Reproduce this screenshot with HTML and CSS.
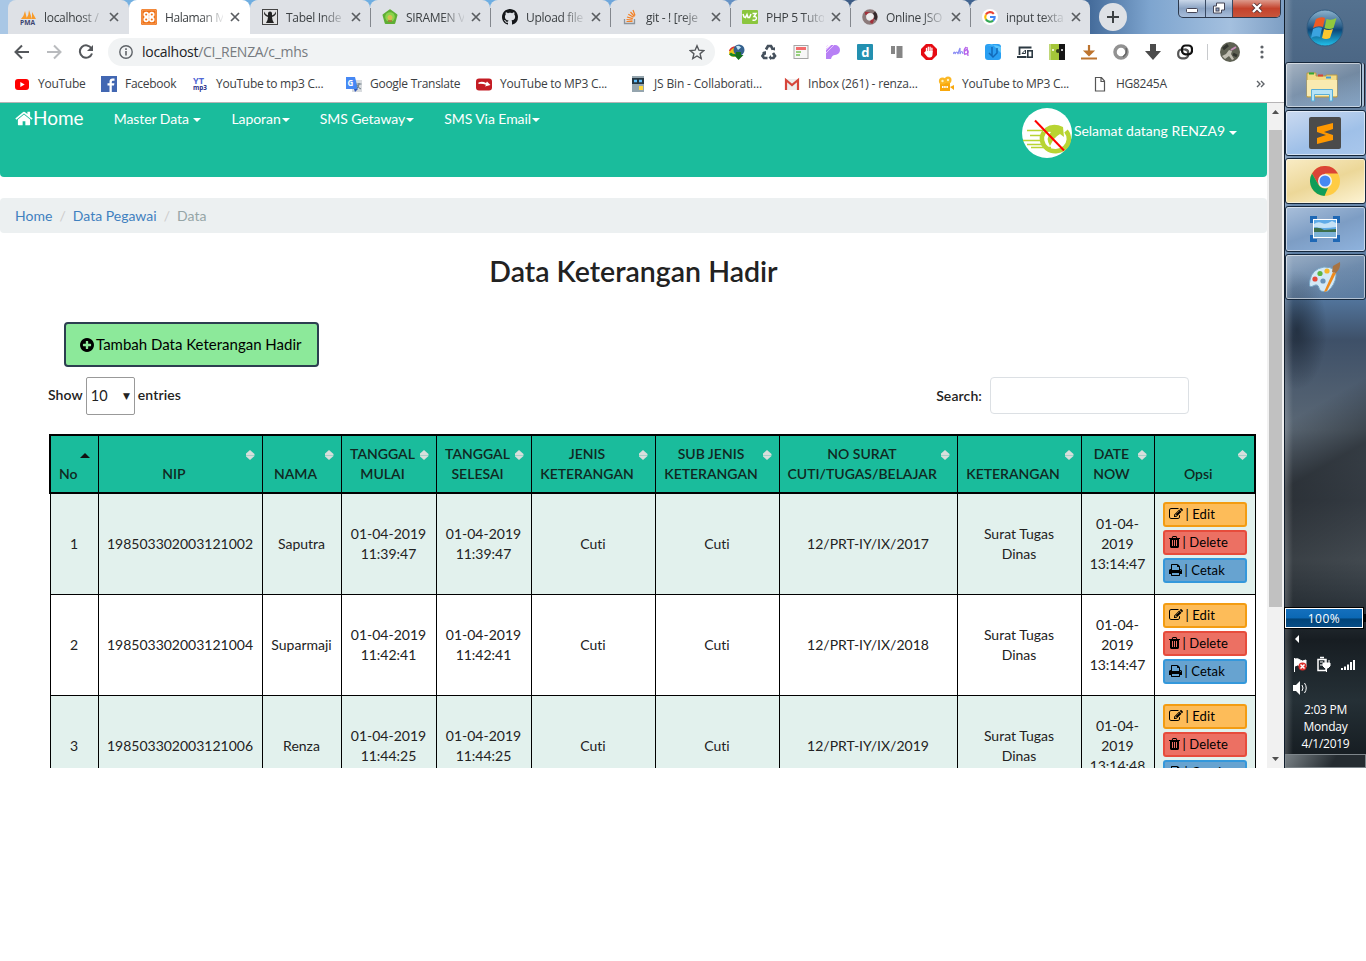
FILE: index.html
```html
<!DOCTYPE html>
<html lang="id">
<head>
<meta charset="utf-8">
<title>Data Keterangan Hadir</title>
<link rel="stylesheet" href="styles.css">
</head>
<body>
<svg class="defs" width="0" height="0">
  <symbol id="close" viewBox="0 0 10 10"><path d="M1 1l8 8M9 1l-8 8" stroke="#5a5d61" stroke-width="1.7"/></symbol>
  <symbol id="home" viewBox="0 0 1664 1792"><path d="M1408 992v480q0 26-19 45t-45 19h-384v-384h-256v384h-384q-26 0-45-19t-19-45v-480q0-1 .5-3t.5-3l575-474 575 474q1 2 1 6zm223-69l-62 74q-8 9-21 11h-3q-13 0-21-7l-692-577-692 577q-12 8-24 7-13-2-21-11l-62-74q-8-10-7-23.5t11-21.5l719-599q32-26 76-26t76 26l244 204v-195q0-14 9-23t23-9h192q14 0 23 9t9 23v408l219 182q10 8 11 21.5t-7 23.5z"/></symbol>
  <symbol id="plus" viewBox="128 128 1536 1536"><path d="M1344 960v-128q0-26-19-45t-45-19h-256v-256q0-26-19-45t-45-19h-128q-26 0-45 19t-19 45v256h-256q-26 0-45 19t-19 45v128q0 26 19 45t45 19h256v256q0 26 19 45t45 19h128q26 0 45-19t19-45v-256h256q26 0 45-19t19-45zm320-64q0 209-103 385.5t-279.5 279.5-385.5 103-385.5-103-279.5-279.5-103-385.5 103-385.5 279.5-279.5 385.5-103 385.5 103 279.5 279.5 103 385.5z"/></symbol>
  <symbol id="edit" viewBox="0 0 1792 1792"><path d="M888 1184l116-116-152-152-116 116v56h96v96h56zm440-720q-16-16-33 1l-350 350q-17 17-1 33t33-1l350-350q17-17 1-33zm80 594v190q0 119-84.5 203.5t-203.5 84.5h-832q-119 0-203.5-84.5t-84.5-203.5v-832q0-119 84.5-203.5t203.5-84.5h832q63 0 117 25 15 7 18 23 3 17-9 29l-49 49q-14 14-32 8-23-6-45-6h-832q-66 0-113 47t-47 113v832q0 66 47 113t113 47h832q66 0 113-47t47-113v-126q0-13 9-22l64-64q15-15 35-7t20 29zm-96-738l288 288-672 672h-288v-288zm444 132l-92 92-288-288 92-92q28-28 68-28t68 28l152 152q28 28 28 68t-28 68z"/></symbol>
  <symbol id="trash" viewBox="192 0 1408 1792"><path d="M704 1376v-704q0-14-9-23t-23-9h-64q-14 0-23 9t-9 23v704q0 14 9 23t23 9h64q14 0 23-9t9-23zm256 0v-704q0-14-9-23t-23-9h-64q-14 0-23 9t-9 23v704q0 14 9 23t23 9h64q14 0 23-9t9-23zm256 0v-704q0-14-9-23t-23-9h-64q-14 0-23 9t-9 23v704q0 14 9 23t23 9h64q14 0 23-9t9-23zm-544-992h448l-48-117q-7-9-17-11h-317q-10 2-17 11zm928 32v64q0 14-9 23t-23 9h-96v948q0 83-47 143.5t-113 60.5h-832q-66 0-113-58.5t-47-141.5v-952h-96q-14 0-23-9t-9-23v-64q0-14 9-23t23-9h309l70-167q15-37 54-63t79-26h320q40 0 79 26t54 63l70 167h309q14 0 23 9t9 23z"/></symbol>
  <symbol id="print" viewBox="64 0 1664 1792"><path d="M448 1536h896v-256h-896v256zm0-640h896v-384h-160q-40 0-68-28t-28-68v-160h-640v640zm1152 64q0-26-19-45t-45-19-45 19-19 45 19 45 45 19 45-19 19-45zm128 0v416q0 13-9.5 22.5t-22.5 9.5h-224v160q0 40-28 68t-68 28h-960q-40 0-68-28t-28-68v-160h-224q-13 0-22.5-9.5t-9.5-22.5v-416q0-79 56.5-135.5t135.5-56.5h64v-544q0-40 28-68t68-28h672q40 0 88 20t76 48l152 152q28 28 48 76t20 88v256h64q79 0 135.5 56.5t56.5 135.5z"/></symbol>
</svg>

<div class="desktop">
<div class="browser">
  <div class="tabstrip">
    <div class="tab first"><svg viewBox="0 0 16 16"><path d="M1 10Q4 7 5 2l2 8zM6 10Q9 6 9 1l3 9zM12 10V3l4 7z" fill="#f89c2c"/><text x="0" y="15.5" font-size="6.5" textLength="15" lengthAdjust="spacingAndGlyphs" class="fi" fill="#3b4470">PMA</text></svg><span class="title">localhost /</span><svg class="x"><use href="#close"/></svg></div>
    <div class="tab active"><svg viewBox="0 0 16 16"><rect width="16" height="16" rx="1.5" fill="#ef7014"/><rect x="1" y="1" width="14" height="14" rx="1" fill="none" stroke="#f7b27c" stroke-width=".8"/><g fill="none" stroke="#fff" stroke-width="1.700"><circle cx="5.200" cy="5.500" r="1.900"/><circle cx="10.800" cy="5.500" r="1.900"/><circle cx="5.200" cy="10.500" r="1.900"/><circle cx="10.800" cy="10.500" r="1.900"/><path d="M6 8h4"/></g></svg><span class="title">Halaman M</span><svg class="x"><use href="#close"/></svg></div>
    <div class="tab aftr"><svg viewBox="0 0 16 16"><rect x=".5" y=".5" width="15" height="15" fill="#e2e2e2" stroke="#444"/><path d="M2.500 2.500L2 5q2 3 4 3l-.5 3-1.500 3h8l-1.500-3L10 8q2 0 4-3l-.500-2.500-1 2.500L10 6.500V4.500a2 2 0 00-4 0v2L3.500 5z" fill="#222"/></svg><span class="title">Tabel Inde</span><svg class="x"><use href="#close"/></svg></div>
    <div class="tab"><svg viewBox="0 0 16 16"><path d="M8 1.300l6.500 4.700-2.200 8H3.700L1.500 6z" fill="#5fae35" stroke="#5fae35" stroke-width="2" stroke-linejoin="round"/><circle cx="8" cy="8" r="4.800" fill="#8bd44b"/><circle cx="8" cy="8.500" r="2.500" fill="#d9bd52"/><path d="M6 12h4" stroke="#c2402c"/></svg><span class="title">SIRAMEN V</span><svg class="x"><use href="#close"/></svg></div>
    <div class="tab"><svg viewBox="0 0 16 16"><path fill="#15171a" d="M8 0C3.580 0 0 3.580 0 8c0 3.540 2.290 6.530 5.470 7.590.4.070.55-.17.55-.38 0-.19-.01-.82-.01-1.490-2.010.37-2.530-.49-2.690-.94-.09-.23-.48-.94-.82-1.130-.28-.15-.68-.52-.01-.53.63-.01 1.080.58 1.230.82.72 1.210 1.870.87 2.330.66.07-.52.28-.87.51-1.070-1.780-.2-3.640-.89-3.640-3.950 0-.87.31-1.590.82-2.150-.08-.2-.36-1.020.08-2.120 0 0 .67-.21 2.200.82.64-.18 1.320-.27 2-.27s1.360.09 2 .27c1.530-1.040 2.200-.82 2.200-.82.44 1.100.16 1.920.08 2.120.51.56.82 1.270.82 2.150 0 3.070-1.870 3.750-3.650 3.950.29.25.54.73.54 1.480 0 1.070-.01 1.930-.01 2.200 0 .21.15.46.55.38A8.010 8.010 0 0016 8c0-4.420-3.580-8-8-8z"/></svg><span class="title">Upload file</span><svg class="x"><use href="#close"/></svg></div>
    <div class="tab"><svg viewBox="0 0 16 16"><path d="M2.500 10v4.500h10V10" fill="none" stroke="#8d949b" stroke-width="1.300"/><path d="M4.500 12.500h6M4.500 10.500l6 .6M5 8l5.800 1.600M6.300 5.300l5.200 3M8.500 3l4 4.500M11 1l2 5.500" stroke="#f48024" stroke-width="1.200"/></svg><span class="title">git - ! [reje</span><svg class="x"><use href="#close"/></svg></div>
    <div class="tab"><svg viewBox="0 0 16 16"><rect y="1" width="16" height="14" rx="1" fill="#8bc63e"/><path d="M1 5l1 3 1.500.5L5 5.500 6 8.500h1.500L9 5M10.500 4.500h3.500L12 7.500q3 0 2.200 2.500-1 2-3.700 1" fill="none" stroke="#fff" stroke-width="1.500"/></svg><span class="title">PHP 5 Tuto</span><svg class="x"><use href="#close"/></svg></div>
    <div class="tab"><svg viewBox="0 0 16 16"><circle cx="8" cy="8" r="5.800" fill="none" stroke="#8b7a7a" stroke-width="4"/><path d="M3 4.500A6 6 0 019 14" fill="none" stroke="#a3303a" stroke-width="3"/><path d="M12 3.500a6 6 0 011 7" fill="none" stroke="#35292b" stroke-width="3"/><circle cx="8" cy="7.500" r="3.600" fill="#eee"/></svg><span class="title">Online JSO</span><svg class="x"><use href="#close"/></svg></div>
    <div class="tab last"><svg viewBox="0 0 16 16"><circle cx="8" cy="8" r="8" fill="#fff"/><g fill="none" stroke-width="2.100"><path d="M11.800 4.800A4.800 4.800 0 003.900 5.600" stroke="#ea4335"/><path d="M3.900 5.600a4.800 4.800 0 000 4.800" stroke="#fbbc05"/><path d="M3.900 10.400a4.800 4.800 0 007.200 1.200" stroke="#34a853"/><path d="M11.100 11.600Q13 10 12.700 8H8" stroke="#4285f4"/></g></svg><span class="title">input texta</span><svg class="x"><use href="#close"/></svg></div>
    <div class="newtab"><svg width="14" height="14"><path d="M7 1v12M1 7h12" stroke="#3c4043" stroke-width="2"/></svg></div>
    <div class="winbtns"><span><svg width="12" height="12"><rect x=".5" y="6.500" width="11" height="4" rx="1" fill="#fff" stroke="#445"/></svg></span><span><svg width="12" height="12"><path d="M3.500 1h8v7h-3v3h-8V4h3z" fill="#fff" stroke="#445"/><rect x="3" y="6" width="3" height="3" fill="#8fa4c4" stroke="#445"/></svg></span><span class="wclose"><svg width="12" height="10"><path d="M2 1l8 8M10 1L2 9" stroke="#533" stroke-width="4"/><path d="M2 1l8 8M10 1L2 9" stroke="#fff" stroke-width="2.400"/></svg></span></div>
  </div>

  <div class="addressbar">
    <svg class="nav" viewBox="0 0 16 16"><path d="M15 8H2M8 1.500L1.500 8 8 14.500" stroke="#54575b"/></svg>
    <svg class="nav" viewBox="0 0 16 16"><path d="M1 8h13M8 1.500L14.500 8 8 14.500" stroke="#b9bbbe"/></svg>
    <svg class="nav" viewBox="0 0 16 16"><path d="M13.500 4.500A6.200 6.200 0 1014 9.500" stroke="#54575b"/><path d="M15 1v6H9z" fill="#54575b"/></svg>
    <div class="omnibox">
      <svg width="14" height="14"><circle cx="7" cy="7" r="6.200" fill="none" stroke="#5f6368" stroke-width="1.400"/><path d="M7 6v4.500M7 3.300v1.600" stroke="#5f6368" stroke-width="1.600"/></svg>
      <span class="url"><b>localhost</b>/CI_RENZA/c_mhs</span>
      <svg class="star" width="16" height="16" viewBox="0 0 16 16"><path d="M8 1.800l1.900 4.400 4.800.4-3.600 3.200 1.100 4.700L8 12l-4.200 2.500 1.100-4.700L1.300 6.600l4.800-.4z" fill="none" stroke="#54575b" stroke-width="1.400"/></svg>
    </div>
    <div class="exts">
      <svg viewBox="0 0 16 16"><path d="M0 9q0-5 7-6l2 8-4 2Q0 12 0 9z" fill="#efc51c"/><path d="M.5 7q2-4 6-4" stroke="#d33" fill="none" stroke-width="1.500"/><path d="M1 9.500q3 3 7 1" stroke="#178a26" fill="none" stroke-width="2.500"/><circle cx="10" cy="6" r="5.500" fill="#35628f"/><path d="M7 2.500q3-2 5 1L9 6z" fill="#c5e6f5"/><path d="M7 8h5v3h2.500L9.500 16 5 11h2z" fill="#15701f"/></svg>
      <svg viewBox="0 0 16 16"><g fill="none" stroke="#45505c" stroke-width="2.700"><path d="M5 5.500L7 2h3l2 3.500M12 9l2 3-1.500 2H9M6.500 14H3l-1.500-2L4 8"/></g><path d="M10 5.500l4 1V3zM10 11v5l-2.500-2.500zM1 8.500l4-1.500v4z" fill="#45505c"/></svg>
      <svg viewBox="0 0 16 16"><rect x="1" y="1.500" width="14" height="13" fill="#f7f7f7" stroke="#a5a5a5"/><path d="M3 4.500h10" stroke="#f26c6c" stroke-width="3"/><path d="M3 8h5M3 11h4" stroke="#78c257" stroke-width="1.300"/></svg>
      <svg viewBox="0 0 16 16"><path d="M1 5l5-4h4a5 5 0 010 10q-3 0-4 4H1z" fill="#b780f5"/><path d="M1 9l8-8M1 6l5-5M1 3l2-2" stroke="#f3d2ff" stroke-width=".8"/></svg>
      <svg viewBox="0 0 16 16"><rect width="16" height="16" rx="1" fill="#2390b0"/><text x="4.200" y="13" class="fi" font-size="13" fill="#fff">d</text></svg>
      <svg viewBox="0 0 16 16"><path d="M2 2h4v8H2zM7.500 2h6v12h-6z" fill="#858585"/></svg>
      <svg viewBox="0 0 16 16"><path d="M5 0h6l5 5v6l-5 5H5l-5-5V5z" fill="#e60b13"/><path d="M5.500 8V4.500M7.300 7V3.200M9.100 7V3.200M10.900 8V4.200" stroke="#fff" stroke-width="1.300" stroke-linecap="round"/><path d="M4.800 7h6.800v3q0 3.500-3 3.500-2 0-3-1.500L3 8.800l1-.8z" fill="#fff"/></svg>
      <svg viewBox="0 0 16 16"><path d="M0 10q2-4 2 0 2-4 3 0 1-4 2-6v6q2-5 3 0" fill="none" stroke="#8a8cf4" stroke-width="1.200"/><path d="M13 3q-3 3-1 8M11 8q3-4 4-1t-3 3M14 3l1 9" fill="none" stroke="#b764ea" stroke-width="1.300"/></svg>
      <svg viewBox="0 0 16 16"><rect width="16" height="16" rx="3" fill="#299ff2"/><path d="M0 3q8-4 16 0v6L7 0z" fill="#5fc6fb"/><path d="M7 3v9M4 9l4 4 4-4V4" fill="none" stroke="#1269b8" stroke-width="1.500"/></svg>
      <svg viewBox="0 0 16 16"><path d="M2.500 11V3.500h12M0 13h9.500" fill="none" stroke="#2c3942" stroke-width="1.800"/><rect x="10.800" y="6.800" width="4.400" height="6.400" fill="#fff" stroke="#2c3942" stroke-width="1.600"/><path d="M5 9.500h3.500V6L5 9.500" fill="none" stroke="#2c3942"/></svg>
      <svg viewBox="0 0 16 16"><path d="M0 0h10v16H0z" fill="#a4c639"/><path d="M10 0h6v16h-6z" fill="#151515"/><path d="M3 6h2M12 6h2" stroke="#fff" stroke-width="1.500"/><path d="M1 0v16" stroke="#dce9b7"/><circle cx="9" cy="7" r="2" fill="#33401a"/></svg>
      <svg viewBox="0 0 16 16"><path d="M8 1v7M4.500 7.500L8 11l3.500-3.500zM0 14.500h16" stroke="#bd742f" stroke-width="2.200" fill="#bd742f"/></svg>
      <svg viewBox="0 0 16 16"><circle cx="8" cy="8" r="6" fill="none" stroke="#929292" stroke-width="3.500"/><path d="M13 4q2 5-3 9" stroke="#666" stroke-width="1.500" fill="none"/></svg>
      <svg viewBox="0 0 16 16"><path d="M5 0h6v7h5l-8 9-8-9h5z" fill="#4b4b4b"/></svg>
      <svg viewBox="0 0 16 16" fill="none" stroke-width="2.200"><rect x="1.200" y="5.500" width="10" height="8.800" rx="3.500" stroke="#555"/><rect x="5" y="1.500" width="10" height="8.800" rx="3.500" stroke="#111"/><path d="M8 5.500q3.200 0 3.200 3" stroke="#555"/></svg>
    </div>
    <i class="sep"></i>
    <svg class="avatar" viewBox="0 0 20 20"><circle cx="10" cy="10" r="10" fill="#5e6153"/><path d="M2 14l4-2 3-4 3 1-1 3 3 5-2 1-3-4-4 3z" fill="#c1bfb3"/><path d="M11 8l5-3" stroke="#ca8fbc" stroke-width="2"/><path d="M3 7l5-4M13 12l4 2" stroke="#32352f" stroke-width="3"/></svg>
    <svg class="dots" width="4" height="16"><g fill="#5f6368"><circle cx="2" cy="3" r="1.600"/><circle cx="2" cy="8" r="1.600"/><circle cx="2" cy="13" r="1.600"/></g></svg>
  </div>

  <div class="bookmarks">
    <span><svg viewBox="0 0 16 16"><rect x="1" y="3" width="14" height="11" rx="3" fill="#f00"/><path d="M6.300 6l4.400 2.500L6.300 11z" fill="#fff"/></svg><em>YouTube</em></span>
    <span><svg viewBox="0 0 16 16"><rect width="16" height="16" fill="#4267b2"/><path d="M8.500 16V9.500h-2V7.300h2V5.500q0-3 3-3h2v2.200H12q-1.200 0-1.200 1.200v1.400h2.600l-.4 2.200h-2.200V16z" fill="#fff"/></svg><em>Facebook</em></span>
    <span><svg viewBox="0 0 16 16"><text x="1" y="7.500" class="fi" font-size="8" textLength="11" lengthAdjust="spacingAndGlyphs" fill="#5267d5">YT</text><text x="1" y="14" class="fi" font-size="7" textLength="14" lengthAdjust="spacingAndGlyphs" fill="#27308a">mp3</text></svg><em>YouTube to mp3 C...</em></span>
    <span><svg viewBox="0 0 16 16"><rect x="6" y="4" width="10" height="12" fill="#d9dcdf"/><path d="M0 1h9l3 12H0z" fill="#4688f4"/><path d="M8 13h4l-3 3z" fill="#3056b8"/><text x="1.500" y="9.500" class="fi" font-size="8" fill="#fff">G</text><path d="M10.500 8h5M13 7v1q0 3-2.500 4.500M11 9q1 3 4 4" stroke="#6d7c86" fill="none"/></svg><em>Google Translate</em></span>
    <span><svg viewBox="0 0 16 16"><rect y="2.500" width="16" height="12" rx="3" fill="#c41c24"/><path d="M2.500 6.500q4-1.500 7.500.500L11 5.500l3.500 3.500-5.500 1.500 1-1.700Q6 7.500 2.500 8z" fill="#fff"/></svg><em>YouTube to MP3 C...</em></span>
    <span><svg viewBox="0 0 16 16"><path d="M2 0h12v16H2z" fill="#95a5ae"/><path d="M2 2h12v6H2z" fill="#253742"/><path d="M4 5h3M9 5h3" stroke="#5ebeff" stroke-width="2.500"/><rect x="9" y="10" width="4" height="4" fill="#ffd83c"/></svg><em class="wider">JS Bin - Collaborati...</em></span>
    <span><svg viewBox="0 0 16 16"><path d="M1 3h14v11H1z" fill="#eee"/><path d="M2 14V4l6 5 6-5v10" fill="none" stroke="#d6453a" stroke-width="2.200"/></svg><em class="wider">Inbox (261) - renza...</em></span>
    <span><svg viewBox="0 0 16 16"><path d="M2 7h10v8H2zM12 11l4-2v5z" fill="#f9a80c"/><circle cx="4.500" cy="5" r="3.600" fill="#fbb724"/><circle cx="10" cy="4" r="3.500" fill="#fbb724"/><circle cx="4.500" cy="5" r="1.200" fill="#fff2c0"/><circle cx="10" cy="4" r="1.200" fill="#fff2c0"/><path d="M4 11h6" stroke="#fff" stroke-width="2" stroke-dasharray="1.500 .7"/></svg><em>YouTube to MP3 C...</em></span>
    <span><svg viewBox="0 0 16 16"><path d="M3.500 1.500h6l3 3.500v10h-9zM9 1.500V5.500h3.500" fill="none" stroke="#555" stroke-width="1.200"/></svg><em>HG8245A</em></span>
    <svg class="more" width="9" height="8"><path d="M1 1l3 3-3 3M5 1l3 3-3 3" fill="none" stroke="#5f6368" stroke-width="1.400"/></svg>
  </div>

  <div class="viewport">
    <main class="page">
      <nav class="navbar">
        <a class="brand"><svg><use href="#home"/></svg>Home</a>
        <a>Master Data <i class="caret"></i></a>
        <a>Laporan<i class="caret"></i></a>
        <a>SMS Getaway<i class="caret"></i></a>
        <a>SMS Via Email<i class="caret"></i></a>
        <a class="user"><svg width="50" height="50" viewBox="0 0 50 50"><circle cx="25" cy="25" r="25" fill="#fff"/><path d="M22 24a13.500 12.500 0 1022-1" fill="none" stroke="#b8d432" stroke-width="4.500"/><path d="M23 20q8-6 18-1l1 10-4-3q-6 3-10 12-5-8 1-14-4-1-7 2z" fill="#b8d432"/><path d="M5 22.500h17M8 27.500h13M1 32.500h20M5 36.500h16M9 39.500h20" stroke="#b8d432" stroke-width="1.400"/><path d="M13 12.500l29 30" stroke="#f00" stroke-width="2"/></svg><span>Selamat datang RENZA9</span><i class="caret"></i></a>
      </nav>
      <div class="crumbs"><a>Home</a><i>/</i><a>Data Pegawai</a><i>/</i><span>Data</span></div>
      <h1>Data Keterangan Hadir</h1>
      <a class="add"><svg><use href="#plus"/></svg><span>Tambah Data Keterangan Hadir</span></a>
      <div class="controls"><span class="lbl">Show</span><span class="select">10<i>▼</i></span><span class="lbl">entries</span><span class="lbl search">Search:</span><span class="input"></span></div>
      <table>
        <colgroup><col class="c1"><col class="c2"><col class="c3"><col class="c4"><col class="c4"><col class="c5"><col class="c5"><col class="c6"><col class="c5"><col class="c7"><col class="c8"></colgroup>
        <thead><tr>
          <th>No<i class="up"></i></th><th>NIP<i class="sort"></i></th><th>NAMA<i class="sort"></i></th><th>TANGGAL MULAI<i class="sort"></i></th><th>TANGGAL SELESAI<i class="sort"></i></th><th>JENIS KETERANGAN<i class="sort"></i></th><th>SUB JENIS KETERANGAN<i class="sort"></i></th><th>NO SURAT CUTI/TUGAS/BELAJAR<i class="sort"></i></th><th>KETERANGAN<i class="sort"></i></th><th>DATE NOW<i class="sort"></i></th><th>Opsi<i class="sort"></i></th>
        </tr></thead>
        <tbody>
          <tr><td>1</td><td>198503302003121002</td><td>Saputra</td><td>01-04-2019 11:39:47</td><td>01-04-2019 11:39:47</td><td>Cuti</td><td>Cuti</td><td>12/PRT-IY/IX/2017</td><td>Surat Tugas Dinas</td><td>01-04-2019 13:14:47</td><td><a class="btn edit"><svg class="w13"><use href="#edit"/></svg>| Edit</a><a class="btn del"><svg class="w10"><use href="#trash"/></svg>| Delete</a><a class="btn prt"><svg class="w12"><use href="#print"/></svg>| Cetak</a></td></tr>
          <tr><td>2</td><td>198503302003121004</td><td>Suparmaji</td><td>01-04-2019 11:42:41</td><td>01-04-2019 11:42:41</td><td>Cuti</td><td>Cuti</td><td>12/PRT-IY/IX/2018</td><td>Surat Tugas Dinas</td><td>01-04-2019 13:14:47</td><td><a class="btn edit"><svg class="w13"><use href="#edit"/></svg>| Edit</a><a class="btn del"><svg class="w10"><use href="#trash"/></svg>| Delete</a><a class="btn prt"><svg class="w12"><use href="#print"/></svg>| Cetak</a></td></tr>
          <tr><td>3</td><td>198503302003121006</td><td>Renza</td><td>01-04-2019 11:44:25</td><td>01-04-2019 11:44:25</td><td>Cuti</td><td>Cuti</td><td>12/PRT-IY/IX/2019</td><td>Surat Tugas Dinas</td><td>01-04-2019 13:14:48</td><td><a class="btn edit"><svg class="w13"><use href="#edit"/></svg>| Edit</a><a class="btn del"><svg class="w10"><use href="#trash"/></svg>| Delete</a><a class="btn prt"><svg class="w12"><use href="#print"/></svg>| Cetak</a></td></tr>
        </tbody>
      </table>
    </main>
    <div class="scrollbar"><svg width="7" height="4"><path d="M0 4l3.500-4L7 4z" fill="#505050"/></svg><div class="thumb"></div><svg class="down" width="7" height="4"><path d="M0 0h7L3.500 4z" fill="#505050"/></svg></div>
  </div>
</div>

<aside class="taskbar">
  <div class="start"><svg width="40" height="40" viewBox="0 0 40 40"><defs><linearGradient id="orb" x2="0" y2="1"><stop stop-color="#8fb5cf"/><stop offset=".45" stop-color="#2c608b"/><stop offset=".55" stop-color="#0c4678"/><stop offset="1" stop-color="#21c4ee"/></linearGradient></defs><circle cx="20" cy="20" r="18" fill="url(#orb)" stroke="#335c80"/><path d="M11 11q5-3 9-1l-2 9q-5-2-10 1z" fill="#ee5a24"/><path d="M21.500 11q5 2 10-1l-3 10q-4 2-9 0z" fill="#91c83e"/><path d="M8 21q5-3 9-1l-2 9q-5-2-9 1z" fill="#3ba3e0"/><path d="M19 21q4 2 9 0l-3 9q-4 2-8 0z" fill="#fdc72f"/></svg></div>
  <div class="task stack"><svg width="34" height="32" viewBox="0 0 34 32"><path d="M2 2h9v3h10v-1h11v22H2z" fill="#f3dc87" stroke="#bb9a42"/><path d="M4 2.500h5" stroke="#34a832" stroke-width="2"/><path d="M13 4.500h5" stroke="#d64535" stroke-width="2"/><path d="M21 6.500h5" stroke="#3f9dd8" stroke-width="2"/><path d="M2 9h30v16H2z" fill="#f9eab0"/><path d="M6.500 30V18.500h21V30h-3v-6.500h-15V30z" fill="#b6e3f7" stroke="#5aaed6"/></svg></div>
  <div class="task b2"><svg width="32" height="32" viewBox="0 0 32 32"><rect width="32" height="32" rx="2" fill="#4b4b4b"/><path d="M24 6v6l-9 3 9 3v5L8 27v-6l9-3-9-3v-5z" fill="#ff9800"/></svg></div>
  <div class="task b3"><svg width="30" height="30" viewBox="0 0 30 30"><circle cx="15" cy="15" r="15" fill="#fc4"/><path d="M2 7.500A15 15 0 0128 7.500H15L8.500 18.800z" fill="#db4437"/><path d="M2 7.500l6.500 11.300Q12 24 18 22l-3.500 8A15 15 0 012 7.500z" fill="#109d59"/><circle cx="15" cy="15" r="7" fill="#f3f3f3"/><circle cx="15" cy="15" r="5.500" fill="#4688f1"/></svg></div>
  <div class="task b4"><svg width="30" height="26" viewBox="0 0 30 26"><path d="M1.500 7V1.500H7M23 1.500h5.500V7M28.500 19v5.500H23M7 24.500H1.500V19" fill="none" stroke="#1f68b5" stroke-width="3"/><rect x="3.500" y="3.500" width="23" height="18" fill="#5fabe8" stroke="#fff"/><path d="M4 8q4-3 8-1t10-2l4 2v4q-12 2-22 0z" fill="#c4e2f7"/><path d="M4 12q6-1 10 2l12-1v3H4z" fill="#3d6f4c"/><path d="M4 16h22v5H4z" fill="#7fb3d8"/></svg></div>
  <div class="task b5"><svg width="32" height="32" viewBox="0 0 32 32"><path d="M1 19Q3 8 15 6q13 0 12 9t-8 15q-8 2-9-3t-6-2-3-6z" fill="#d3e9f7" stroke="#7aa7c6"/><circle cx="6" cy="18" r="2.600" fill="#e34a3b"/><circle cx="11" cy="12.500" r="2.600" fill="#5bb542"/><circle cx="18" cy="10" r="2.600" fill="#f5b72b"/><circle cx="14" cy="20" r="2.600" fill="#6a93b8"/><path d="M15 31l9-20 3 1-9 18z" fill="#ee8a1d"/><path d="M23 11l1-6 7-4q1 6-4 11z" fill="#a87342"/></svg></div>
  <div class="gap"></div>
  <div class="power"><div class="battery">100%</div><i></i></div>
  <div class="tray">
    <svg width="82" height="70" viewBox="1 0 82 70"><path d="M15 7v8l-4-4z" fill="#fff"/><path d="M10.500 30v14M11 31q3-1 5 1t6 0v7q-4 1-6-1t-5 0z" stroke="#fff" fill="#fff"/><circle cx="18.500" cy="38.500" r="4" fill="#dc2e2b"/><path d="M16.500 36.500l4 4M20.500 36.500l-4 4" stroke="#fff" stroke-width="1.500"/><path d="M34 31.500h8v11h-8zM36 29.500h4" stroke="#fff" stroke-width="1.500" fill="none"/><path d="M36 34h3M36 37h3" stroke="#fff"/><path d="M39 35h7v3l-2 2h-3l-2-2zM41 32v3M45 32v3M42.500 40v4" stroke="#fff" fill="#fff"/><path d="M57 40v2h2v-2zM60 38.500V42h2v-3.500zM63 36.500V42h2v-5.500zM66 34v8h2v-8zM69 32v10h2V32z" fill="#fff"/><path d="M9 57h3l4-4v14l-4-4H9z" fill="#fff"/><path d="M18 57q2 3 0 6M20.500 55q3.500 5 0 10" stroke="#fff" fill="none"/></svg>
    <div class="clock"><div>2:03 PM</div><div>Monday</div><div>4/1/2019</div></div>
  </div>
  <div class="peek"></div>
</aside>
</div>
</body>
</html>
```
FILE: styles.css
```css
* { box-sizing: border-box; }
body { margin: 0; background: #fff; font-family: Lato, sans-serif; color: #222; overflow: hidden; font-variant-ligatures: none; }
i, em { font-style: normal; }
.defs { position: absolute; }
.desktop { display: flex; width: 1366px; height: 768px; overflow: hidden; }
.fi { font-family: "Open Sans", sans-serif; font-weight: 700; }

/* Browser chrome */
.browser { width: 1284px; display: flex; flex-direction: column; font-family: "Open Sans", sans-serif; }
.tabstrip { height: 34px; display: flex; padding-left: 8px; background: linear-gradient(90deg, #a9c7e5 0, #a9c7e5 20px, #70aee0 140px, #6eaee2 520px, #6f9fd4 700px, #3d5c85 850px, #456c9b 1090px, #7ea5cf 1150px, #a4c0df 1230px, #7e9fc4 1284px); }
.tab { flex: 0 0 120px; height: 34px; background: #dee1e6; border-radius: 8px 8px 0 0; display: flex; align-items: center; padding-left: 12px; position: relative; }
.tab > svg { width: 16px; height: 16px; flex: none; }
.tab .title { width: 58px; flex: none; margin-left: 8px; font-size: 12px; letter-spacing: -.3px; color: #3c4043; white-space: nowrap; overflow: hidden; -webkit-mask-image: linear-gradient(90deg, #000 62%, #0002 98%); mask-image: linear-gradient(90deg, #000 62%, #0002 98%); }
.tab > svg.x { width: 10px; height: 10px; margin-left: 7px; }
.tab + .tab::before { content: ""; position: absolute; left: 0; top: 8px; width: 1px; height: 19px; background: #83878d; }
.tab.first, .tab.active { flex-basis: 121px; }
.tab.active { background: #fff; }
.tab.active .title { letter-spacing: -.4px; }
.tab.active.active::before, .tab.aftr.aftr::before { display: none; }
.newtab { width: 28px; height: 28px; border-radius: 14px; background: #dee1e6; margin: 3px 0 0 9px; display: grid; place-items: center; }
.winbtns { margin-left: auto; margin-right: 3px; height: 18px; width: 103px; display: flex; border: 1px solid #2c394d; border-top: 0; border-radius: 0 0 5px 5px; background: linear-gradient(#c9d7e9, #8aa2c2 50%, #a8bedb); overflow: hidden; }
.winbtns span { width: 27px; display: grid; place-items: center; border-right: 1px solid #394a63; padding-bottom: 2px; }
.winbtns .wclose { flex: 1; border: 0; background: linear-gradient(#dd9a8c, #c4422c 50%, #c8553b); }
.addressbar { height: 36px; display: flex; align-items: center; padding-left: 14px; }
.nav { width: 16px; height: 16px; margin-right: 16px; fill: none; stroke-width: 2; }
.omnibox { width: 607px; height: 28px; margin-left: -2px; background: #f1f3f4; border-radius: 14px; display: flex; align-items: center; padding: 0 10px 0 11px; }
.url { font-size: 14px; letter-spacing: -.28px; margin-left: 9px; padding-bottom: 2px; color: #777b80; white-space: nowrap; }
.url b { font-weight: 400; color: #202124; }
.star { margin-left: auto; }
.exts { display: flex; gap: 16px; margin-left: 14px; }
.exts svg { width: 16px; height: 16px; }
.sep { width: 1px; height: 16px; background: #c8cacd; margin-left: 14px; }
.avatar { width: 20px; height: 20px; margin-left: 12px; }
.dots { margin-left: 20px; }
.bookmarks { height: 33px; border-bottom: 1px solid #b6b4b6; display: grid; grid-template-columns: 87px 91px 154px 130px repeat(4, 154px) 155px auto; padding: 0 0 4px 14px; align-items: center; font-size: 12px; color: #3c4043; justify-content: start; }
.bookmarks span { display: flex; align-items: center; white-space: nowrap; }
.bookmarks span svg { width: 16px; height: 16px; margin-right: 8px; }
.bookmarks em { letter-spacing: -.27px; padding-bottom: 1px; }
.bookmarks .wider { letter-spacing: -.16px; }
.bookmarks .more { margin-left: 9px; }

/* Page */
.viewport { flex: 1; min-height: 0; display: flex; font-family: Lato, sans-serif; overflow: hidden; }
.page { width: 1267px; height: 665px; overflow: hidden; }
.navbar { height: 74px; background: #1abc9c; border-radius: 0 0 4px 4px; color: #fff; display: flex; padding-left: 15px; font-size: 14px; white-space: nowrap; }
.navbar a { line-height: 20px; padding-top: 6px; height: 30px; margin-right: 30px; letter-spacing: -.06px; }
.navbar .brand { font-size: 19px; display: flex; padding-top: 5px; letter-spacing: 0; }
.brand svg { width: 18px; height: 19px; fill: #fff; margin-top: 1px; }
.caret { display: inline-block; border: 4px solid transparent; border-top-color: currentColor; border-bottom: 0; margin-left: 1px; vertical-align: middle; }
.navbar .user { margin: 0 30px 0 auto; display: flex; align-items: center; height: 50px; margin-top: 5px; padding: 0; letter-spacing: 0; }
.user span { margin: -5px 3px 0 2px; }
.crumbs { height: 35px; margin-top: 21px; padding: 0 15px; background: #ecf0f1; border-radius: 4px; font-size: 14px; line-height: 36px; display: flex; }
.crumbs a { color: #3f80bf; }
.crumbs i { color: #ccc; width: 20.500px; text-align: center; }
.crumbs span { color: #95a5a6; }
h1 { margin: 0; height: 89px; padding-top: 20px; text-align: center; font-size: 28.500px; line-height: 36px; font-weight: 600; }
.add { display: flex; align-items: center; width: 255px; height: 45px; margin-left: 64px; padding-left: 14px; border: 2px solid #2c3e50; border-radius: 4px; background: #8ce99a; color: #000; font-size: 15px; white-space: nowrap; }
.add span { padding-bottom: 1px; }
.add svg { width: 14px; height: 14px; margin-right: 2px; }
.controls { display: flex; height: 67px; padding: 10px 0 0 48px; font-size: 15px; line-height: 36px; }
.lbl { font-size: 14px; font-weight: 600; white-space: nowrap; letter-spacing: .1px; }
.select { width: 49px; height: 38px; border: 1px solid #999; border-radius: 2px; margin: 0 3px; padding: 0 4px; display: flex; justify-content: space-between; font-size: 14.500px; }
.select i { font: 9px/36px "DejaVu Sans", sans-serif; }
.search { margin-left: auto; margin-right: 8px; line-height: 38px; }
.input { width: 199px; height: 37px; border: 1px solid #dce0e4; border-radius: 4px; margin-right: 78px; }
table { margin-left: 49px; width: 1207px; table-layout: fixed; border-collapse: collapse; font-size: 14px; line-height: 20px; text-align: center; }
.c1 { width: 48px; } .c2 { width: 164px; } .c3 { width: 79px; } .c4 { width: 95px; } .c5 { width: 124px; } .c6 { width: 178px; } .c7 { width: 73px; } .c8 { width: 101px; }
thead { background: #1abc9c; border: 2px solid #000; }
th { position: relative; height: 58px; padding: 8px 20px 8px 8px; border: 1px solid #000; font-weight: 600; vertical-align: bottom; color: #102822; }
thead th { border-top: 2px solid #000; border-bottom: 2px solid #000; }
td { height: 101px; padding: 0 8px; border: 1px solid #000; }
tbody tr:nth-child(odd) { background: #e2f1ed; }
.up { position: absolute; right: 8px; top: 17px; border: 5px solid transparent; border-bottom-color: #111; border-top: 0; }
.sort { position: absolute; right: 7px; top: 14px; width: 9px; height: 10px; clip-path: polygon(50% 0, 100% 40%, 100% 60%, 50% 100%, 0 60%, 0 40%); background: linear-gradient(#d8dedc 4.500px, #a3d3c8 4.500px, #a3d3c8 5.500px, #d8dedc 5.500px); }
.btn { display: flex; align-items: center; height: 25px; margin-bottom: 3px; width: 84px; padding-left: 4px; border: 2px solid; border-radius: 3px; color: #000; font-size: 13px; letter-spacing: .1px; line-height: 20px; white-space: nowrap; }
.btn svg { height: 14px; margin-right: 3px; }
.w13 { width: 14px; } .w10 { width: 11px; } .w12 { width: 13px; }
.edit { background: #fdbc59; border-color: #f39c12; }
.del { background: #ec7063; border-color: #e74c3c; }
.prt { background: #67a3d0; border-color: #3498db; }
.scrollbar { width: 17px; background: #f1f1f1; display: flex; flex-direction: column; align-items: center; padding-top: 7px; }
.thumb { width: 13px; height: 477px; margin-top: 16px; background: #c1c1c1; }
.down { margin-top: auto; margin-bottom: 7px; }

/* Desktop taskbar */
.taskbar { width: 82px; border-left: 1px solid #101d2c; background: linear-gradient(90deg, #ffffff33, transparent 8px), radial-gradient(ellipse 30px 60px at 12px 330px, #10182299, transparent), linear-gradient(150deg, transparent 52%, #00000066 60%, transparent 80%), linear-gradient(#54718f 0, #4c6785 60px, #7794b5 150px, #52749b 300px, #3e5068 340px, #5b6875 430px, #454e58 500px, #4a5259 560px, #30383f 600px, #171d22 640px, #253036 700px, #13191e 768px); display: flex; flex-direction: column; }
.start { height: 62px; padding: 8px 0 0 20px; }
.task { width: 81px; height: 46px; margin-bottom: 2px; border: 1px solid #15273b; border-radius: 3px; box-shadow: inset 0 0 0 1px #ffffff88; background: linear-gradient(160deg, #ffffff80, #ffffff30 50%, #a8c9ea80); display: grid; place-items: center; padding-right: 2px; }
.stack { width: 77px; padding: 0; box-shadow: inset 0 0 0 1px #ffffff88, 3px 0 0 -1px #a9bfd5, 4px 0 0 -1px #223; }
.stack svg { margin-right: 4px; margin-top: 3px; }
.b2 { background: linear-gradient(160deg, #cbdaf0, #9fc0e8 60%, #a9c7ec); }
.b3 { background: linear-gradient(160deg, #f9ecc5, #ecd798 50%, #fdf4d4); }
.b4 { background: linear-gradient(160deg, #a9bfda, #7d9dc4 50%, #8fb3de); }
.b5 { background: linear-gradient(160deg, #ffffff60, #ffffff20 50%, #6887a860); }
.gap { flex: 1; }
.power { display: flex; align-items: center; }
.power i { width: 3px; height: 8px; background: #000; }
.battery { width: 78px; height: 20px; border: 1px solid #fff; outline: 1px solid #000; background: linear-gradient(#1570bd, #0b68b4 50%, #014377 55%, #064c86); color: #fff; font: 12px/19px "Open Sans", sans-serif; letter-spacing: .5px; text-align: center; }
.tray { height: 126px; color: #fff; display: flex; flex-direction: column; }
.tray svg { flex: none; }
.clock { font: 12px/17px "Open Sans", sans-serif; text-align: center; letter-spacing: -.25px; padding-top: 3px; }
.peek { height: 14px; border: 1px solid #7d858a; background: linear-gradient(120deg, #777f84, #252c31 60%); }
```
